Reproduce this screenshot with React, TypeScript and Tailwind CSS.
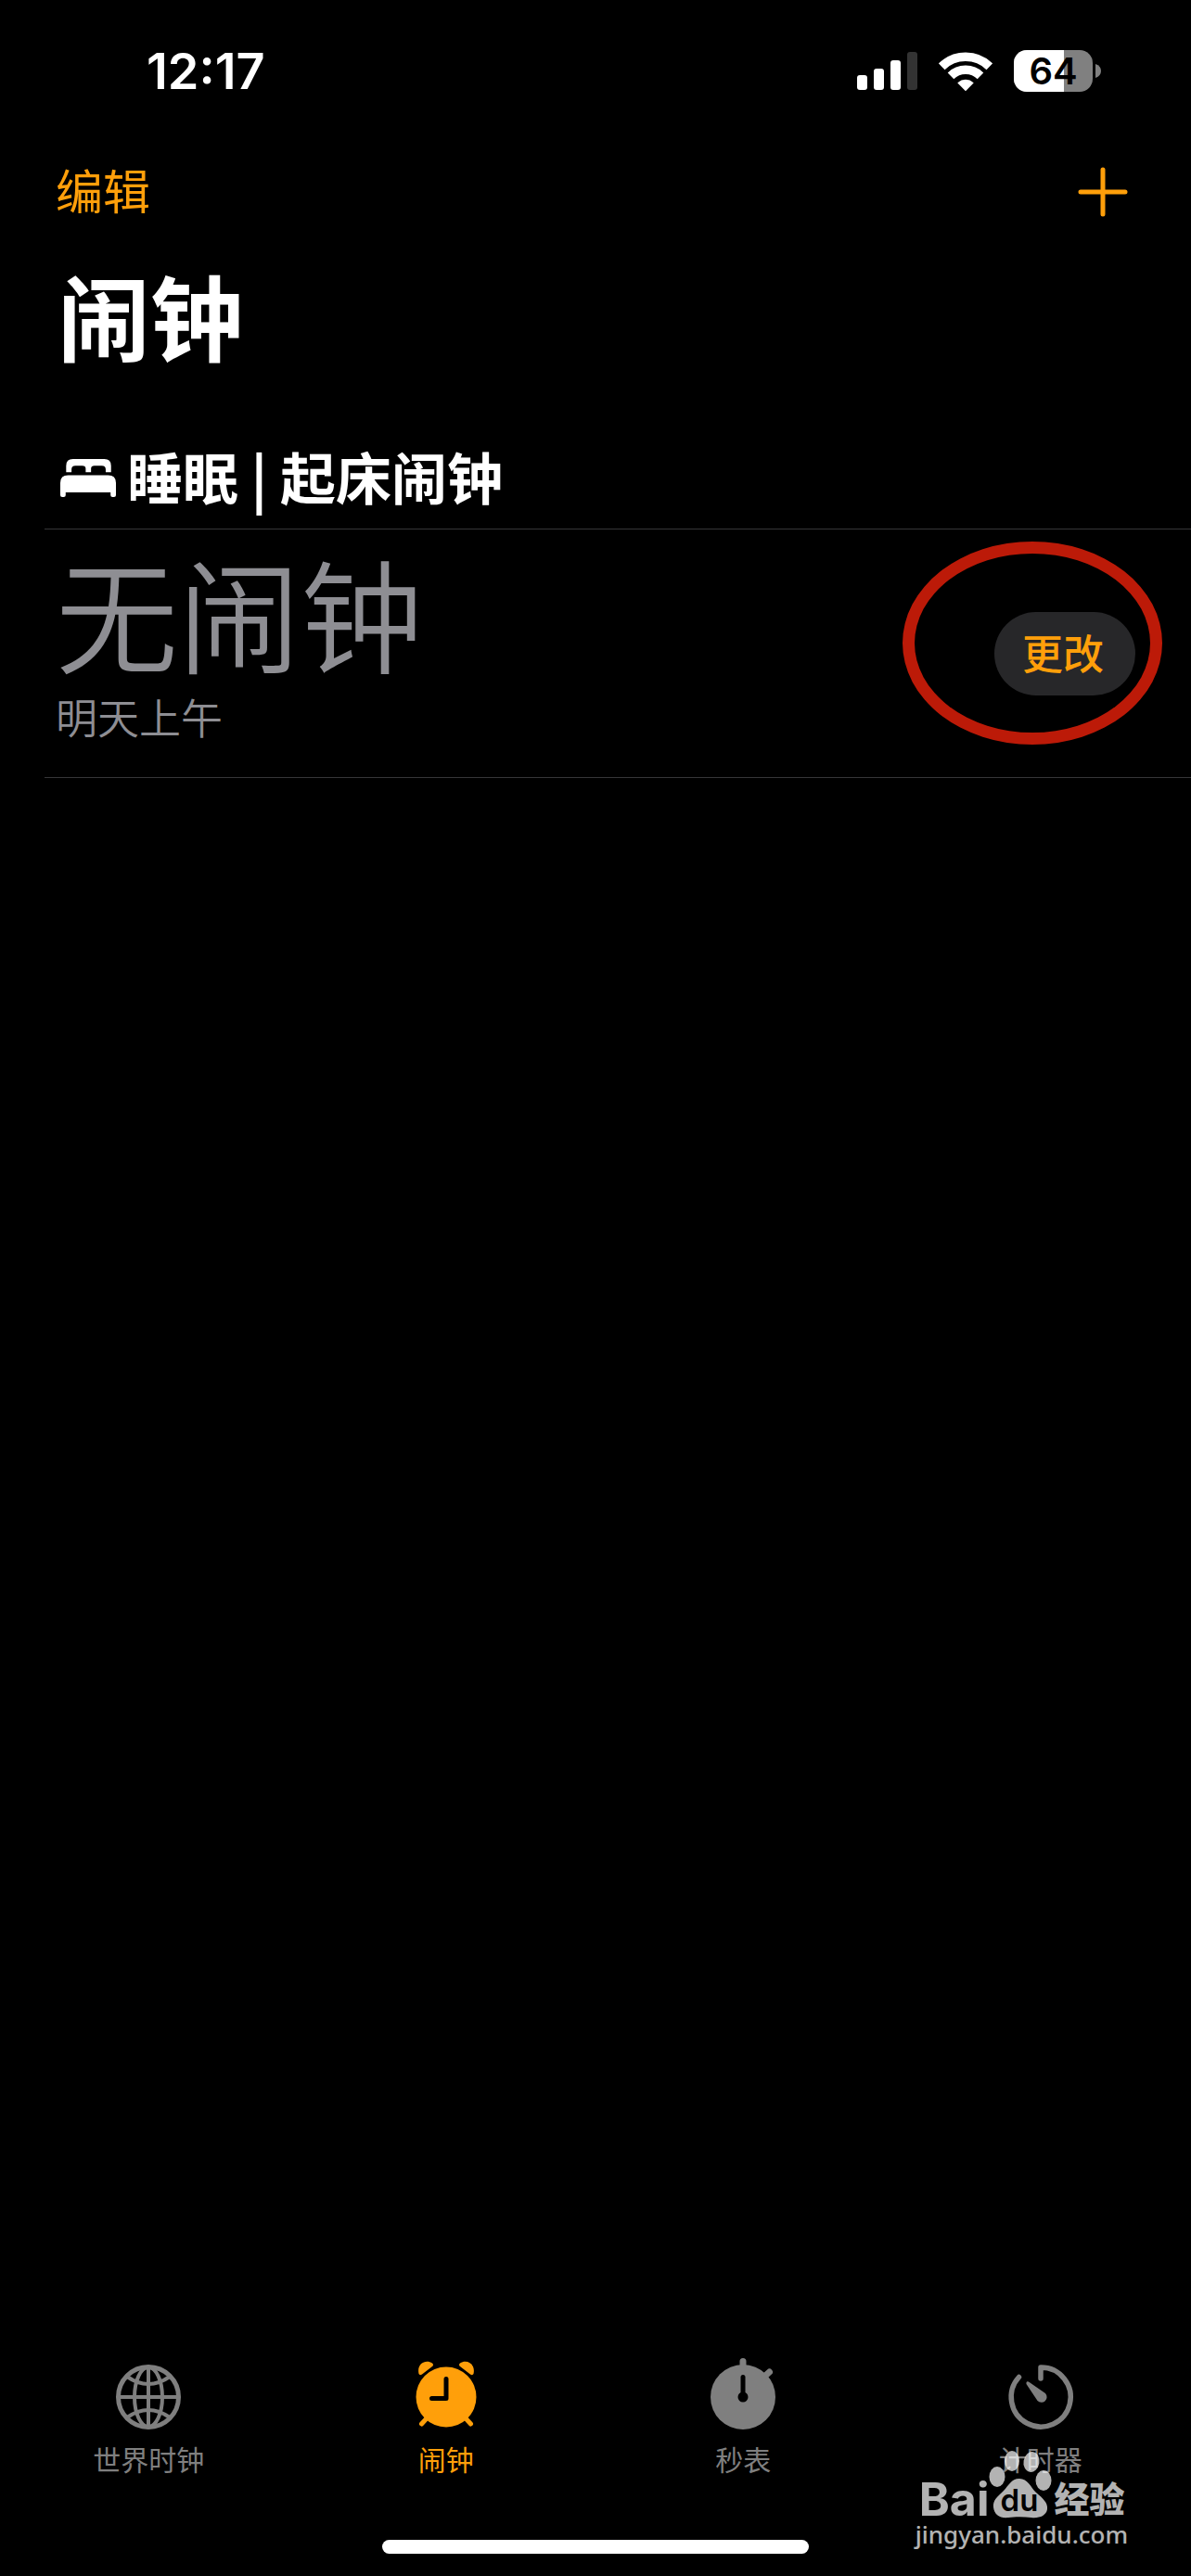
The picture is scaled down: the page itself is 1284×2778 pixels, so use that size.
import type { ReactNode } from "react";
import clsx from "clsx";

const SignalIcon = () => (
  <svg width="65" height="42" viewBox="0 0 65 42" fill="#fff" aria-hidden="true">
    <rect x="0" y="25" width="11" height="16" rx="3" />
    <rect x="18" y="18" width="11" height="23" rx="3" />
    <rect x="36" y="9" width="11" height="32" rx="3" />
    <rect x="54" y="0" width="11" height="41" rx="3" fill="#333" />
  </svg>
);

const WifiIcon = () => (
  <svg width="58" height="42" viewBox="0 0 58 42" aria-hidden="true">
    <g fill="none" stroke="#fff" strokeWidth="9.5">
      <path d="M3.2 15.8 A37 37 0 0 1 54.8 15.8" />
      <path d="M13 25.8 A23 23 0 0 1 45 25.8" />
    </g>
    <path
      d="M29 42 L20.6 33.4 A12.2 12.2 0 0 1 37.4 33.4 Z"
      fill="#fff"
      stroke="#fff"
      strokeWidth="0.5"
      strokeLinejoin="round"
    />
  </svg>
);

const Battery = ({ level }: { level: number }) => (
  <div className="flex items-center gap-[3px]">
    <div className="relative flex h-[45px] w-[85px] items-center justify-center rounded-[14px] bg-[#808080]">
      <div
        className="absolute inset-y-0 left-0 rounded-l-[14px] bg-white"
        style={{ width: `${level}%` }}
      />
      <span className="relative text-[40px] leading-none font-semibold text-black">
        {level}
      </span>
    </div>
    <svg width="6" height="15" viewBox="0 0 6 15" aria-hidden="true">
      <path d="M0 0 C4 1.5 6 4 6 7.5 S4 13.5 0 15 Z" fill="#808080" />
    </svg>
  </div>
);

const BedIcon = () => (
  <svg width="60" height="41" viewBox="0 0 57 40" preserveAspectRatio="none" fill="#fff" aria-hidden="true">
    <path d="M6 14 V7 Q6 0 13 0 H45 Q52 0 52 7 V14 H46.5 V11 Q46.5 7 42.5 7 H35 Q31.5 7 31.5 10 V14 H26 V10 Q26 7 22.5 7 H15.5 Q11.5 7 11.5 11 V14 Z" />
    <path d="M0 25 Q0 17 8 17 H49 Q57 17 57 25 V38 Q57 40 55 40 H53.5 Q51.5 40 51.5 38 V35 H5.5 V38 Q5.5 40 3.5 40 H2 Q0 40 0 38 Z" />
  </svg>
);

const GlobeIcon = () => (
  <svg width="80" height="80" viewBox="0 0 80 80" aria-hidden="true">
    <g fill="none" stroke="currentColor" strokeWidth="4">
      <circle cx="40" cy="40" r="32.5" strokeWidth="5" />
      <ellipse cx="40" cy="40" rx="15" ry="32" />
      <path d="M40 8 V72 M8 40 H72" />
      <path d="M17 18 Q40 34 63 18 M17 62 Q40 46 63 62" />
    </g>
  </svg>
);

const AlarmIcon = () => (
  <svg width="80" height="80" viewBox="0 0 80 80" aria-hidden="true">
    <circle cx="40" cy="40" r="32.5" fill="currentColor" />
    <path
      d="M19 63 L13.5 69 M61 63 L66.5 69"
      stroke="currentColor"
      strokeWidth="5"
      strokeLinecap="round"
    />
    <path
      d="M10.5 15 C8 4 18 -1 25 3.5 Q27 5 25 7 L14 15.5 Q11.5 17 10.5 15 Z M69.5 15 C72 4 62 -1 55 3.5 Q53 5 55 7 L66 15.5 Q68.5 17 69.5 15 Z"
      fill="currentColor"
    />
    <path
      d="M40 20.5 V41.5 H24.5"
      fill="none"
      stroke="#000"
      strokeWidth="5"
      strokeLinecap="round"
      strokeLinejoin="round"
    />
  </svg>
);

const StopwatchIcon = () => (
  <svg width="80" height="80" viewBox="0 0 80 80" overflow="visible" aria-hidden="true">
    <circle cx="40" cy="40" r="35" fill="currentColor" />
    <path
      d="M40 8 V1.5 M63 18 L68.5 13"
      stroke="currentColor"
      strokeWidth="7"
      strokeLinecap="round"
    />
    <path d="M40 18.5 V40" stroke="#000" strokeWidth="5" strokeLinecap="round" />
    <circle cx="40" cy="40" r="5.5" fill="#000" />
  </svg>
);

const TimerIcon = () => (
  <svg width="80" height="80" viewBox="0 0 80 80" aria-hidden="true">
    <path
      d="M40 20 V8 A32 32 0 1 1 16.5 18.5"
      fill="none"
      stroke="currentColor"
      strokeWidth="5.5"
      strokeLinecap="round"
      strokeLinejoin="round"
    />
    <path
      d="M25 23.5 Q26.5 23 28 24.2 L45 36 A5.8 5.8 0 1 1 36.5 44 L24.5 26 Q24 24.5 25 23.5 Z"
      fill="currentColor"
    />
  </svg>
);

const tabs: { label: string; icon: ReactNode; active?: boolean }[] = [
  { label: "世界时钟", icon: <GlobeIcon /> },
  { label: "闹钟", icon: <AlarmIcon />, active: true },
  { label: "秒表", icon: <StopwatchIcon /> },
  { label: "计时器", icon: <TimerIcon /> },
];

const StatusBar = () => (
  <header className="flex h-[153px] items-center justify-between pr-[97px] pl-[158px] font-[Inter,'Liberation_Sans',sans-serif]">
    <time className="text-[54px] leading-none font-semibold">12:17</time>
    <div className="flex items-center gap-[23px]">
      <SignalIcon />
      <WifiIcon />
      <Battery level={64} />
    </div>
  </header>
);

const Watermark = () => (
  <div className="pointer-events-none absolute right-[68px] bottom-[31px] flex flex-col opacity-70">
    <div className="flex items-end pl-1">
      <span className="font-[Inter,sans-serif] text-[50px] leading-[48px] font-bold">
        Bai
      </span>
      <svg width="68" height="80" viewBox="0 0 68 80" fill="#fff" aria-hidden="true">
        <ellipse cx="9" cy="32" rx="8.5" ry="11" />
        <ellipse cx="25" cy="15" rx="8" ry="11" />
        <ellipse cx="46" cy="16" rx="8.5" ry="11" transform="rotate(10 46 16)" />
        <ellipse cx="59" cy="36" rx="8.5" ry="11" />
        <path d="M33 34 C42 34 45 43 51 49 C58 55 64 60 63 67 C62 74 54 77 46 76 C38 75 28 75 21 76 C12 77 6 73 5 65 C4 57 10 53 16 47 C21 42 24 34 33 34 Z" />
        <text x="33" y="69" textAnchor="middle" fill="#000" fontSize="33" fontWeight="600" fontFamily="Inter, sans-serif">
          du
        </text>
      </svg>
      <span className="ml-[2px] text-[38px] leading-[52px] font-black">经验</span>
    </div>
    <span className="font-['Noto_Sans','Open_Sans',sans-serif] text-[26px] leading-[28px] font-medium">
      jingyan.baidu.com
    </span>
  </div>
);

const App = () => {
  return (
    <div className="relative flex min-h-screen flex-col bg-black font-['Noto_Sans_CJK_SC',sans-serif] text-white">
      <StatusBar />

      <nav className="flex h-[108px] items-center justify-between pr-[67px] pl-[60px] text-[#ff9f0a]">
        <button className="pb-1.5 text-[51px] leading-none">编辑</button>
        <button aria-label="添加闹钟">
          <svg width="56" height="56" viewBox="0 0 56 56" aria-hidden="true">
            <path
              d="M28 4 V52 M4 28 H52"
              stroke="currentColor"
              strokeWidth="5"
              strokeLinecap="round"
            />
          </svg>
        </button>
      </nav>

      <main className="flex-1">
        <h1 className="pt-6 pl-[62px] text-[100px] leading-[108px] font-bold">
          闹钟
        </h1>

        <section className="pt-[74px]">
          <h2 className="ml-12 flex h-[104px] items-center gap-3 border-b border-[#363638] pb-1.5 pl-[17px] text-[60px] leading-none font-bold">
            <BedIcon />
            <span className="pb-1.5">睡眠 | 起床闹钟</span>
          </h2>

          <div className="relative ml-12 flex h-[268px] items-center justify-between border-b border-[#363638] pr-[60px] pl-3">
            <div className="self-start pt-4 font-[350] text-[#8e8e93]">
              <p className="text-[132px] leading-[144px]">无闹钟</p>
              <p className="mt-3 text-[45px] leading-[60px]">明天上午</p>
            </div>
            <button className="h-[90px] rounded-full bg-[#272729] pr-[34px] pb-1 pl-[30px] text-[44px] leading-none font-medium text-[#ff9f0a]">
              更改
            </button>
            <div className="pointer-events-none absolute top-[13px] right-[31px] h-[219px] w-[280px] rounded-[50%] border-[13px] border-[#bc1a08]" />
          </div>
        </section>
      </main>

      <footer>
        <nav className="grid grid-cols-4 pr-[2px]">
          {tabs.map((tab) => (
            <a
              key={tab.label}
              href="#"
              aria-current={tab.active ? "page" : undefined}
              className={clsx(
                "flex flex-col items-center gap-[10px]",
                tab.active ? "text-[#ff9f0a]" : "text-[#7f7f7f]",
              )}
            >
              {tab.icon}
              <span className="text-[30px] leading-[32px]">{tab.label}</span>
            </a>
          ))}
        </nav>
        <div className="mx-auto mt-[72px] mb-6 h-[15px] w-[460px] rounded-full bg-white" />
      </footer>

      <Watermark />
    </div>
  );
};

export default App;
